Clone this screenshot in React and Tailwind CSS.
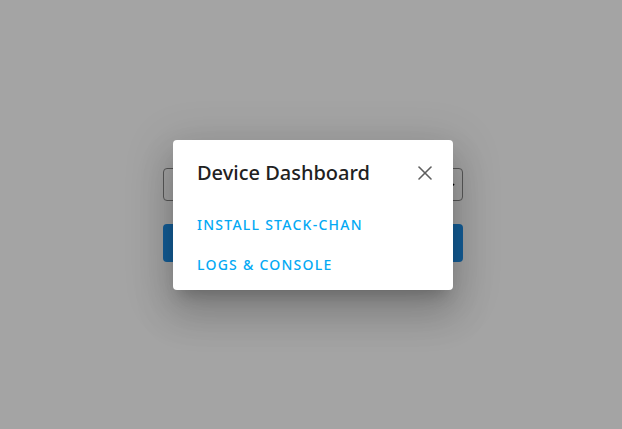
import { X } from 'lucide-react'

export default function App() {
  return (
    <div className="relative h-[429px] w-[622px] overflow-hidden bg-white" style={{ fontFamily: '"Noto Sans", "Open Sans", sans-serif' }}>
      {/* page behind the dialog */}
      <div className="flex flex-col items-center pl-[4px] pt-[168px]">
        <div className="flex h-[33px] w-[300px] items-center justify-end rounded-[4px] border border-[#8a8a8a] pr-[6px]">
          <svg width="10" height="10" viewBox="0 0 10 10"><path d="M2 4l3 3 3-3" fill="none" stroke="#000" strokeWidth="1.6" /></svg>
        </div>
        <div className="mt-[23px] h-[38px] w-[300px] rounded-[4px] bg-[#2193ec]" />
      </div>

      {/* scrim */}
      <div className="absolute inset-0 bg-black/[0.355]" />

      {/* dialog */}
      <div className="absolute left-[173px] top-[140px] flex h-[150px] w-[280px] flex-col rounded-[4px] bg-white shadow-[0_11px_15px_-7px_rgba(0,0,0,0.2),0_24px_38px_3px_rgba(0,0,0,0.14),0_9px_46px_8px_rgba(0,0,0,0.12)]">
        <div className="flex h-[64px] items-center justify-between pl-[24px] pr-[16px] pt-[2px]">
          <span className="text-[20px] font-medium text-[#212121]">Device Dashboard</span>
          <button className="flex h-[24px] w-[24px] items-center justify-center text-[#5f5f5f]">
            <X size={24} strokeWidth={1.6} />
          </button>
        </div>
        <div className="flex flex-col pl-[24px]">
          <a className="flex h-[40px] items-center text-[14px] font-medium uppercase tracking-[1.25px] text-[#03a9f4]">Install Stack-chan</a>
          <a className="flex h-[40px] items-center text-[14px] font-medium uppercase tracking-[1.25px] text-[#03a9f4]">Logs &amp; Console</a>
        </div>
      </div>
    </div>
  )
}
